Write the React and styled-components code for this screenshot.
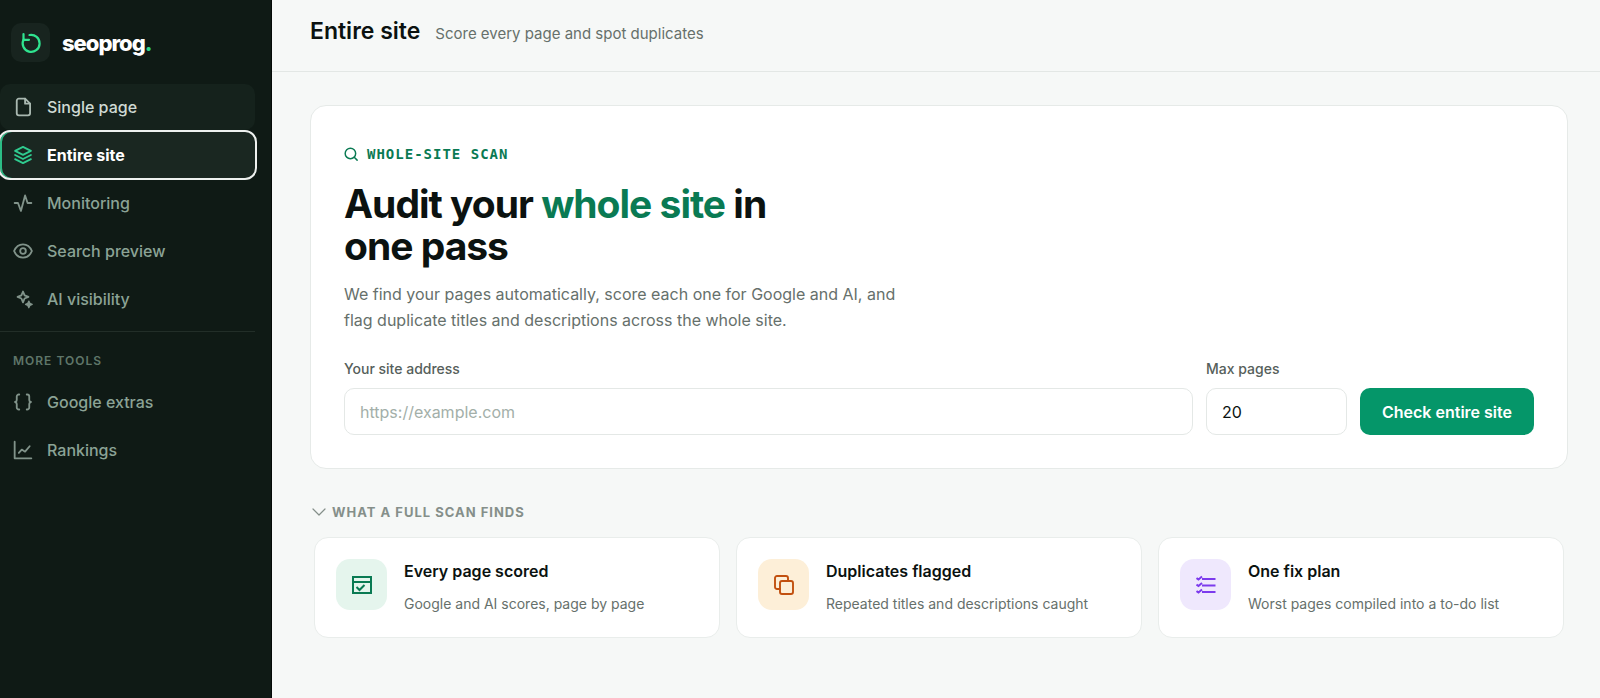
import React from "react";
import styled, { createGlobalStyle, css } from "styled-components";

const Global = createGlobalStyle`
  *, *::before, *::after { box-sizing: border-box; }
  body {
    margin: 0;
    background: #f6f8f7;
    color: #0b1210;
    font-family: Inter, "Liberation Sans", sans-serif;
    font-size: 16px;
    line-height: 24px;
  }
  h1, h2, h3, p { margin: 0; }
  button, input { font: inherit; }
`;

const Shell = styled.div`
  display: grid;
  grid-template-columns: 272px minmax(0, 1fr);
  min-height: 100vh;
`;

const Sidebar = styled.aside`
  background: #0f1a15;
  border-right: 1px solid #050a08;
  padding: 23px 16px 24px 0;
`;

const Brand = styled.a`
  display: flex;
  align-items: center;
  gap: 12px;
  padding-left: 11px;
  margin-bottom: 22px;
  color: #ffffff;
  font-size: 22px;
  font-weight: 800;
  letter-spacing: -1px;
  text-decoration: none;
`;

const BrandTile = styled.span`
  display: grid;
  place-items: center;
  width: 39px;
  height: 39px;
  border-radius: 10px;
  background: #18241f;
  color: #2fe38f;
`;

const BrandDot = styled.span`
  color: #2fd68a;
`;

const Nav = styled.nav`
  display: flex;
  flex-direction: column;
  gap: 2px;
`;

const NavLink = styled.a`
  display: flex;
  align-items: center;
  gap: 14px;
  height: 46px;
  padding-left: 13px;
  border-radius: 10px;
  color: #8ba395;
  font-weight: 500;
  text-decoration: none;

  svg { color: #81938a; }

  ${({ $state }) => $state === "hover" && css`
    background: #15221c;
    color: #cfdad4;
    svg { color: #a9b8b0; }
  `}

  ${({ $state }) => $state === "active" && css`
    background: #1a2721;
    color: #ffffff;
    font-weight: 700;
    box-shadow: inset 2px 0 0 #2bbd85;
    outline: 2px solid #eef1ef;
    svg { color: #2fcb8f; }
  `}
`;

const NavRule = styled.hr`
  width: 100%;
  height: 1px;
  margin: 9px 0 19px;
  border: 0;
  background: #222e28;
`;

const NavHeading = styled.h2`
  padding-left: 13px;
  margin-bottom: 8px;
  color: #5f7669;
  font-size: 12px;
  font-weight: 600;
  line-height: 20px;
  letter-spacing: 1px;
  text-transform: uppercase;
`;

const Main = styled.main`
  min-width: 0;
`;

const TopBar = styled.header`
  display: flex;
  align-items: baseline;
  gap: 15px;
  height: 72px;
  padding: 15px 38px 0;
  border-bottom: 1px solid #e3e7e5;
`;

const PageTitle = styled.h1`
  font-size: 23px;
  font-weight: 600;
  line-height: 32px;
`;

const PageHint = styled.p`
  color: #66706b;
  font-size: 15px;
`;

const Content = styled.div`
  padding: 33px 32px 48px 38px;
`;

const ScanCard = styled.section`
  padding: 36px 33px 33px;
  border: 1px solid #e6eae8;
  border-radius: 16px;
  background: #ffffff;
`;

const Eyebrow = styled.p`
  display: flex;
  align-items: center;
  gap: 9px;
  margin-bottom: 17px;
  color: #0a7a53;
  font-family: "DejaVu Sans Mono", "Liberation Mono", monospace;
  font-size: 14px;
  font-weight: 700;
  letter-spacing: 1px;
  text-transform: uppercase;
`;

const Headline = styled.h2`
  max-width: 480px;
  margin-bottom: 14px;
  font-size: 39px;
  font-weight: 700;
  line-height: 42px;
  letter-spacing: -1px;

  em { color: #0a7a53; font-style: normal; }
`;

const Lead = styled.p`
  max-width: 580px;
  margin-bottom: 24px;
  color: #66706b;
  font-size: 16px;
  line-height: 26px;
`;

const ScanForm = styled.form`
  display: flex;
  align-items: flex-end;
  gap: 13px;
`;

const Field = styled.div`
  display: flex;
  flex-direction: column;
  gap: 7px;
  ${({ $grow }) => ($grow ? "flex: 1; min-width: 0;" : "width: 141px;")}
`;

const Label = styled.label`
  color: #56605b;
  font-size: 14px;
  font-weight: 500;
`;

const TextInput = styled.input`
  width: 100%;
  height: 47px;
  padding: 0 15px;
  border: 1px solid #e4e8e6;
  border-radius: 10px;
  background: #ffffff;
  color: #0b1210;

  &::placeholder { color: #a3afa9; opacity: 1; }
`;

const SubmitButton = styled.button`
  width: 174px;
  height: 47px;
  padding: 0;
  border: 0;
  border-radius: 10px;
  background: #059669;
  color: #ffffff;
  font-weight: 600;
  white-space: nowrap;
  cursor: pointer;
`;

const Finds = styled.details`
  margin-top: 31px;
`;

const FindsSummary = styled.summary`
  display: flex;
  align-items: center;
  gap: 6px;
  margin-bottom: 13px;
  padding-left: 2px;
  color: #858f8a;
  font-size: 13px;
  font-weight: 700;
  letter-spacing: 1px;
  text-transform: uppercase;
  list-style: none;
  cursor: pointer;

  &::-webkit-details-marker { display: none; }
`;

const FindsGrid = styled.div`
  display: grid;
  grid-template-columns: repeat(3, minmax(0, 1fr));
  gap: 16px;
  padding: 0 4px;
`;

const FindCard = styled.article`
  display: flex;
  align-items: flex-start;
  gap: 17px;
  padding: 21px;
  border: 1px solid #e9edeb;
  border-radius: 14px;
  background: #ffffff;
`;

const tones = {
  green: { bg: "#e5f5ed", fg: "#0a7a53" },
  amber: { bg: "#fdefd8", fg: "#c2500f" },
  violet: { bg: "#efe8fd", fg: "#7c3aed" },
};

const FindIcon = styled.span`
  display: grid;
  flex: none;
  place-items: center;
  width: 51px;
  height: 51px;
  border-radius: 14px;
  background: ${({ $tone }) => tones[$tone].bg};
  color: ${({ $tone }) => tones[$tone].fg};
`;

const FindText = styled.div`
  min-width: 0;
`;

const FindTitle = styled.h3`
  margin-bottom: 9px;
  font-size: 16px;
  font-weight: 600;
`;

const FindDesc = styled.p`
  color: #66706b;
  font-size: 14px;
`;

const Icon = ({ size = 20, box = 24, stroke = 2, children }) => (
  <svg width={size} height={size} viewBox={`0 0 ${box} ${box}`} fill="none" stroke="currentColor"
    strokeWidth={stroke} strokeLinecap="round" strokeLinejoin="round" aria-hidden="true">
    {children}
  </svg>
);

const FileIcon = () => (
  <Icon stroke={2.2}>
    <path d="M14.5 2H7A2.5 2.5 0 0 0 4.500 4.500v15A2.500 2.500 0 0 0 7 22h11a2.500 2.500 0 0 0 2.500-2.500V8z" />
    <path d="M14.5 2V8h6" />
  </Icon>
);
const LayersIcon = () => (
  <Icon stroke={2.2}>
    <path d="M12 2.2 21.5 7 12 11.8 2.5 7z" />
    <path d="M2.5 12 12 16.8 21.5 12" />
    <path d="M2.5 17 12 21.8 21.5 17" />
  </Icon>
);
const PulseIcon = () => (
  <Icon stroke={2.2}><path d="M2 12h4l3.500 9.500 5-18.500 3 9H22" /></Icon>
);
const EyeIcon = () => (
  <Icon stroke={2.2}>
    <path d="M1.3 12C3.4 7 7.3 4 12 4s8.6 3 10.7 8c-2.1 5-6 8-10.7 8S3.4 17 1.3 12z" />
    <circle cx="12" cy="12" r="3.4" />
  </Icon>
);
const SparkIcon = () => (
  <Icon stroke={2.2}>
    <path d="M12 3 13.900 7.600 18.500 9.500 13.900 11.400 12 16 10.100 11.400 5.500 9.500 10.100 7.600z" />
    <path d="M19 14.500 20.300 17.200 23 18.500 20.300 19.800 19 22.500 17.700 19.800 15 18.500 17.700 17.200z" fill="currentColor" strokeWidth="1.500" />
  </Icon>
);
const BracesIcon = () => (
  <Icon stroke={2.2}>
    <path d="M7.5 3H7a2.5 2.5 0 0 0-2.500 2.500v4A2.500 2.500 0 0 1 2.500 12a2.500 2.500 0 0 1 2 2.500v4A2.500 2.500 0 0 0 7 21h.5" />
    <path d="M16.5 3h.5a2.500 2.500 0 0 1 2.500 2.500v4a2.500 2.500 0 0 0 2 2.500 2.500 2.500 0 0 0-2 2.500v4A2.500 2.500 0 0 1 17 21h-.5" />
  </Icon>
);
const ChartIcon = () => (
  <Icon stroke={2.2}>
    <path d="M2 2v20h20" />
    <path d="M7 15.5 10.500 11.500l4 2.500L20 7.500" />
  </Icon>
);
const LogoIcon = () => (
  <Icon size={24} stroke={2.2}>
    <path d="M4.500 3V8.800H10" />
    <path d="M4.600 8.400A8.500 8.500 0 1 0 10.500 4" />
  </Icon>
);
const SearchIcon = () => (
  <Icon size={14} stroke={2.5}>
    <circle cx="11" cy="11" r="9" />
    <path d="M18 18l4.500 4.500" />
  </Icon>
);
const ChevronIcon = () => (
  <Icon size={14} box={14} stroke={1.2}><path d="M1 4l6 6 6-6" /></Icon>
);
const WindowCheckIcon = () => (
  <svg width="20" height="20" viewBox="0 0 20 20" fill="none" stroke="currentColor" strokeWidth="2" aria-hidden="true">
    <path d="M1 2h18v16H1zM1 7h18M4.500 12l3 3 5-5" />
  </svg>
);
const CopyIcon = () => (
  <Icon size={20} box={20} stroke={1.9}>
    <rect x="6" y="6" width="13" height="13" rx="2" />
    <path d="M6 14H3a2 2 0 0 1-2-2V3a2 2 0 0 1 2-2h9a2 2 0 0 1 2 2v3" />
  </Icon>
);
const ChecklistIcon = () => (
  <svg width="20" height="20" viewBox="0 0 20 20" fill="none" stroke="currentColor" strokeWidth="2" aria-hidden="true">
    <path d="M6 4h13.500M6 10.500h13.500M6 17h13.500" />
    <path d="M.5 3l2 1.500L6 1.500M.5 9.500l2 1.500L6 8M.5 16l2 1.500L6 14.500" />
  </svg>
);

const primaryLinks = [
  { label: "Single page", icon: FileIcon, state: "hover" },
  { label: "Entire site", icon: LayersIcon, state: "active" },
  { label: "Monitoring", icon: PulseIcon },
  { label: "Search preview", icon: EyeIcon },
  { label: "AI visibility", icon: SparkIcon },
];

const toolLinks = [
  { label: "Google extras", icon: BracesIcon },
  { label: "Rankings", icon: ChartIcon },
];

const finds = [
  { title: "Every page scored", desc: "Google and AI scores, page by page", tone: "green", icon: WindowCheckIcon },
  { title: "Duplicates flagged", desc: "Repeated titles and descriptions caught", tone: "amber", icon: CopyIcon },
  { title: "One fix plan", desc: "Worst pages compiled into a to-do list", tone: "violet", icon: ChecklistIcon },
];

const NavList = ({ links, label }) => (
  <Nav aria-label={label}>
    {links.map(({ label: text, icon: Glyph, state }) => (
      <NavLink key={text} href="#" $state={state} aria-current={state === "active" ? "page" : undefined}>
        <Glyph />
        {text}
      </NavLink>
    ))}
  </Nav>
);

export default function App() {
  return (
    <>
      <Global />
      <Shell>
        <Sidebar>
          <Brand href="#">
            <BrandTile><LogoIcon /></BrandTile>
            <span>seoprog<BrandDot>.</BrandDot></span>
          </Brand>
          <NavList links={primaryLinks} label="Main" />
          <NavRule />
          <NavHeading>More tools</NavHeading>
          <NavList links={toolLinks} label="More tools" />
        </Sidebar>
        <Main>
          <TopBar>
            <PageTitle>Entire site</PageTitle>
            <PageHint>Score every page and spot duplicates</PageHint>
          </TopBar>
          <Content>
            <ScanCard>
              <Eyebrow><SearchIcon />Whole-site scan</Eyebrow>
              <Headline>Audit your <em>whole site</em> in one pass</Headline>
              <Lead>
                We find your pages automatically, score each one for Google and AI, and flag duplicate
                titles and descriptions across the whole site.
              </Lead>
              <ScanForm onSubmit={(event) => event.preventDefault()}>
                <Field $grow>
                  <Label htmlFor="site">Your site address</Label>
                  <TextInput id="site" type="url" placeholder="https://example.com" />
                </Field>
                <Field>
                  <Label htmlFor="max">Max pages</Label>
                  <TextInput id="max" type="number" defaultValue="20" />
                </Field>
                <SubmitButton type="submit">Check entire site</SubmitButton>
              </ScanForm>
            </ScanCard>
            <Finds open>
              <FindsSummary><ChevronIcon />What a full scan finds</FindsSummary>
              <FindsGrid>
                {finds.map(({ title, desc, tone, icon: Glyph }) => (
                  <FindCard key={title}>
                    <FindIcon $tone={tone}><Glyph /></FindIcon>
                    <FindText>
                      <FindTitle>{title}</FindTitle>
                      <FindDesc>{desc}</FindDesc>
                    </FindText>
                  </FindCard>
                ))}
              </FindsGrid>
            </Finds>
          </Content>
        </Main>
      </Shell>
    </>
  );
}
